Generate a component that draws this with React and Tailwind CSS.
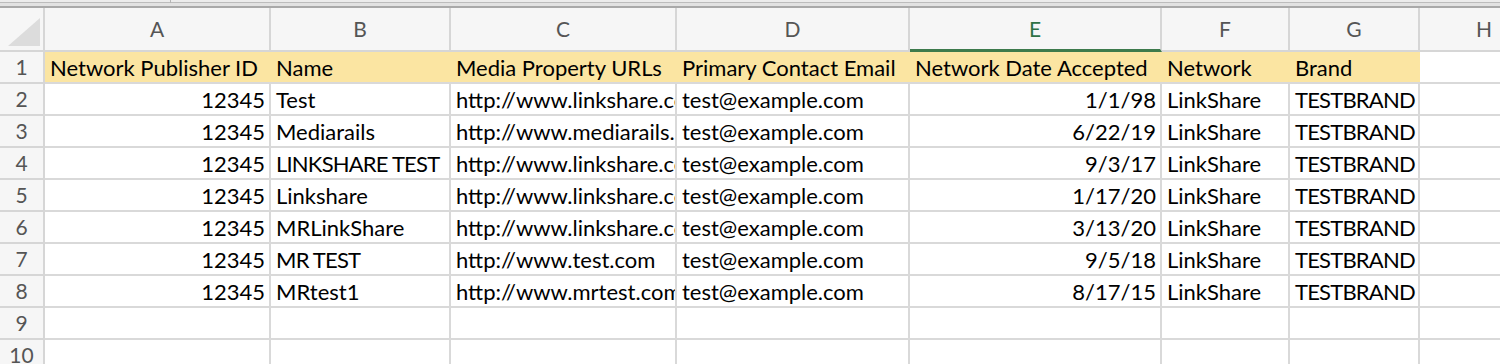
import React from 'react';

const COLS = [
  { key: 'A', w: 226 },
  { key: 'B', w: 180 },
  { key: 'C', w: 226 },
  { key: 'D', w: 233 },
  { key: 'E', w: 252 },
  { key: 'F', w: 128 },
  { key: 'G', w: 130 },
  { key: 'H', w: 130 },
];

const HEADERS = [
  'Network Publisher ID',
  'Name',
  'Media Property URLs',
  'Primary Contact Email',
  'Network Date Accepted',
  'Network',
  'Brand',
];

const ROWS = [
  ['12345', 'Test', 'http://www.linkshare.com', 'test@example.com', '1/1/98', 'LinkShare', 'TESTBRAND'],
  ['12345', 'Mediarails', 'http://www.mediarails.com', 'test@example.com', '6/22/19', 'LinkShare', 'TESTBRAND'],
  ['12345', 'LINKSHARE TEST', 'http://www.linkshare.com', 'test@example.com', '9/3/17', 'LinkShare', 'TESTBRAND'],
  ['12345', 'Linkshare', 'http://www.linkshare.com', 'test@example.com', '1/17/20', 'LinkShare', 'TESTBRAND'],
  ['12345', 'MRLinkShare', 'http://www.linkshare.com', 'test@example.com', '3/13/20', 'LinkShare', 'TESTBRAND'],
  ['12345', 'MR TEST', 'http://www.test.com', 'test@example.com', '9/5/18', 'LinkShare', 'TESTBRAND'],
  ['12345', 'MRtest1', 'http://www.mrtest.com', 'test@example.com', '8/17/15', 'LinkShare', 'TESTBRAND'],
];

// numbers and dates sit on the right, like a real sheet
const RIGHT = [true, false, false, false, true, false, false];

const font = { fontFamily: 'Lato, "Open Sans", sans-serif' };

const isCaps = s => s && /[A-Z]{3}/.test(s) && s === s.toUpperCase();

function ColumnHeader() {
  return (
    <div className="flex h-[44px] bg-[#f6f6f6]">
      <div className="relative w-[45px] shrink-0 border-r-2 border-b-2 border-[#d6d6d6]">
        <div className="absolute right-[3px] bottom-[4px] w-0 h-0 border-l-[32px] border-l-transparent border-b-[28px] border-b-[#dcdcdc]" />
      </div>
      {COLS.map(c => (
        <div
          key={c.key}
          style={{ width: c.w }}
          className={
            'shrink-0 flex items-center justify-center text-[21px] border-r-2 ' +
            (c.key === 'E'
              ? 'text-[#2f7245] border-b-[3px] border-b-[#3d7a4c] border-r-[#d6d6d6]'
              : 'text-[#555555] border-b-2 border-[#d6d6d6]')
          }
        >
          {c.key}
        </div>
      ))}
    </div>
  );
}

function Row({ num, cells, filled }) {
  return (
    <div className="flex h-[32px]">
      <div className="w-[45px] shrink-0 flex items-center justify-center text-[21px] text-[#555555] bg-[#f6f6f6] border-r-2 border-b-2 border-[#d6d6d6]">
        {num}
      </div>
      {COLS.map((c, i) => {
        const text = cells ? cells[i] : '';
        const yellow = filled && i < 7;
        const right = !filled && RIGHT[i];
        return (
          <div
            key={c.key}
            style={{ width: c.w }}
            className={
              'shrink-0 overflow-hidden whitespace-nowrap flex items-center text-[22px] text-black border-b-2 border-[#d9d9d9] ' +
              (yellow ? 'bg-[#fbe5a2] ' : 'border-r-2 ') +
              (isCaps(text) ? 'tracking-[-0.8px] ' : '') +
              (right ? 'justify-end pr-[4px]' : 'pl-[5px]')
            }
          >
            {text}
          </div>
        );
      })}
    </div>
  );
}

export default function App() {
  return (
    <div className="w-[1500px] h-[364px] overflow-hidden bg-white" style={font}>
      <div className="relative h-[8px]">
        <div className="h-[2px] bg-[#ececec]" />
        <div className="h-[1px] bg-[#bcbcbc]" />
        <div className="h-[3px] bg-[#e2e2e2]" />
        <div className="h-[2px] bg-[#a9a9a9]" />
        <div className="absolute left-[170px] top-0 w-[1px] h-[3px] bg-[#b5b5b5]" />
      </div>
      <ColumnHeader />
      <Row num={1} cells={HEADERS} filled />
      {ROWS.map((r, i) => (
        <Row key={i} num={i + 2} cells={r} />
      ))}
      <Row num={9} />
      <Row num={10} />
    </div>
  );
}
